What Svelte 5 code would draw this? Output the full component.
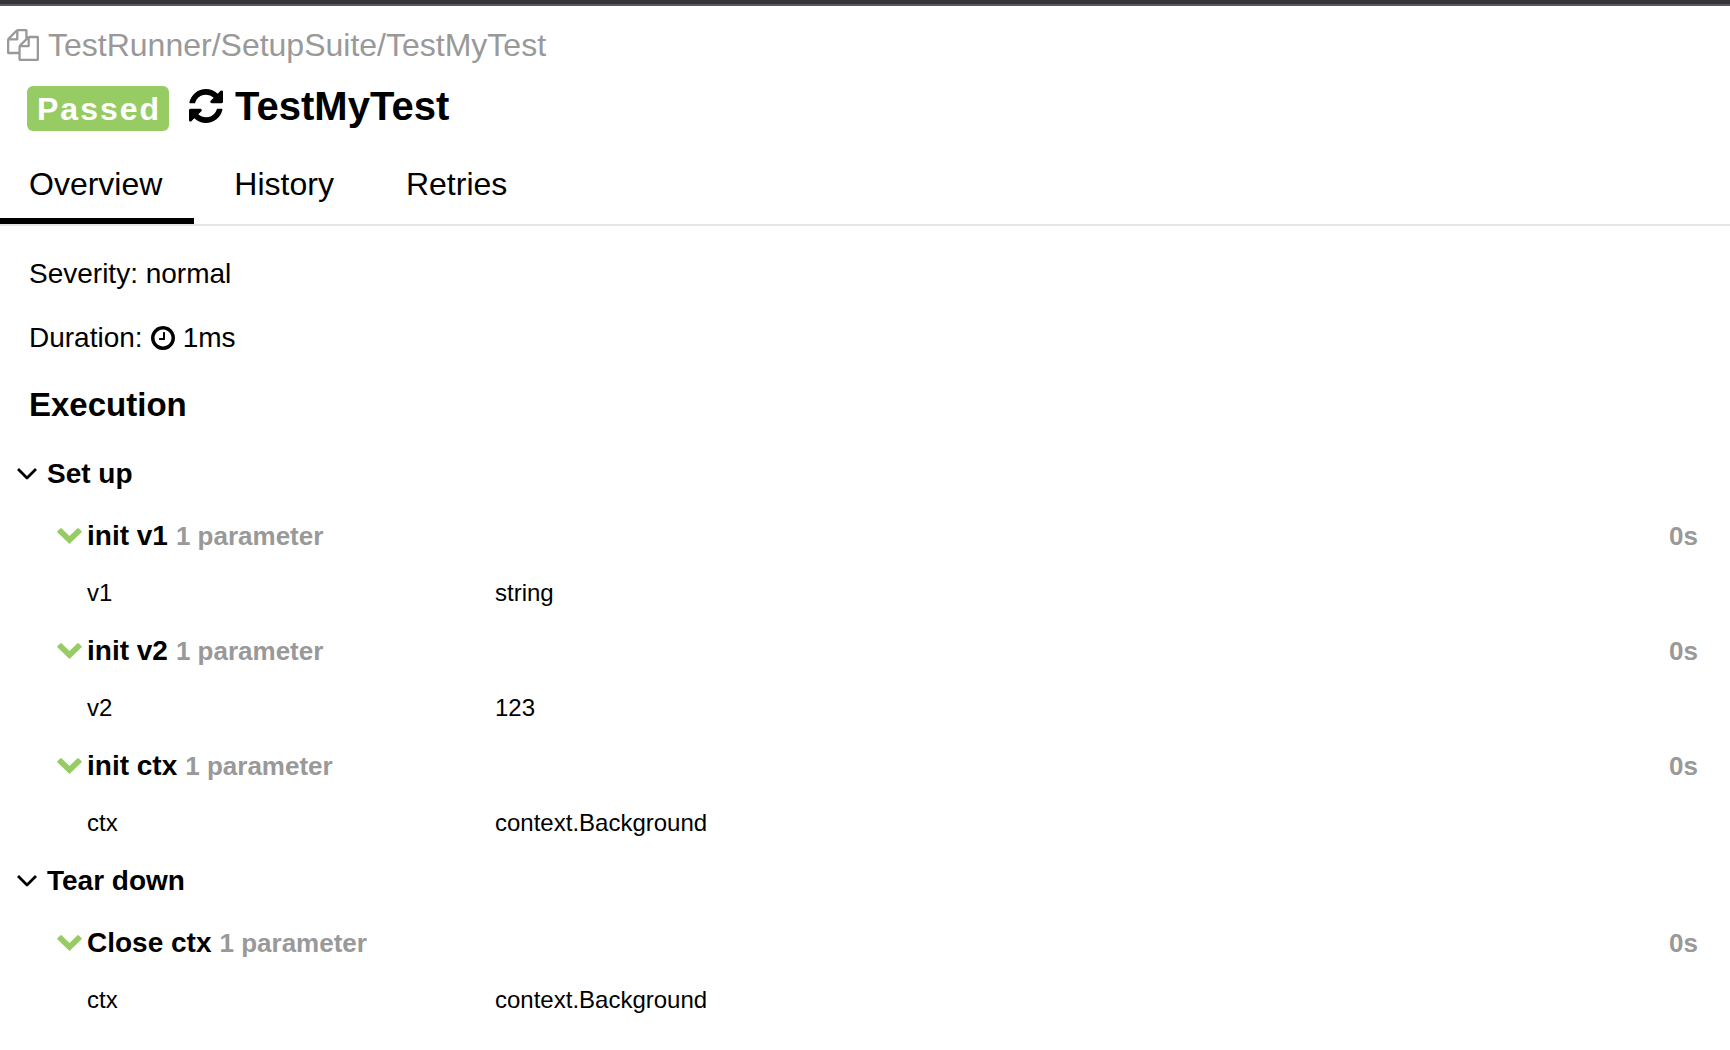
<script lang="ts">
  type Step = { name: string; time: string; params: { name: string; value: string }[] };
  type Stage = { name: string; steps: Step[] };

  const tabs = ['Overview', 'History', 'Retries'];
  let active = $state('Overview');

  const stages: Stage[] = [
    {
      name: 'Set up',
      steps: [
        { name: 'init v1', time: '0s', params: [{ name: 'v1', value: 'string' }] },
        { name: 'init v2', time: '0s', params: [{ name: 'v2', value: '123' }] },
        { name: 'init ctx', time: '0s', params: [{ name: 'ctx', value: 'context.Background' }] },
      ],
    },
    {
      name: 'Tear down',
      steps: [
        { name: 'Close ctx', time: '0s', params: [{ name: 'ctx', value: 'context.Background' }] },
      ],
    },
  ];

  let closed = $state<Record<string, boolean>>({});
  const toggle = (key: string) => (closed[key] = !closed[key]);
</script>

<div class="strip"></div>
<main>
  <header>
    <a class="path" href="#suite">
      <svg width="32" height="32" viewBox="0 0 1792 1792" aria-hidden="true"><path d="M1696 384q40 0 68 28t28 68v1216q0 40-28 68t-68 28h-960q-40 0-68-28t-28-68v-288h-544q-40 0-68-28t-28-68v-672q0-40 20-88t48-76l408-408q28-28 76-48t88-20h416q40 0 68 28t28 68v328q68-40 128-40h416zm-544 213l-299 299h299v-299zm-640-384l-299 299h299v-299zm196 647l316-316v-416h-384v416q0 40-28 68t-68 28h-416v640h512v-256q0-40 20-88t48-76zm956 804v-1152h-384v416q0 40-28 68t-68 28h-416v640h896z" /></svg>
      <span>TestRunner/SetupSuite/TestMyTest</span>
    </a>
    <div class="title">
      <span class="badge">Passed</span>
      <h1>
        <svg width="34" height="34" viewBox="0 0 1536 1536" aria-hidden="true"><path d="M1511 928q0 5-1 7-64 268-268 434.5t-478 166.5q-146 0-282.5-55t-243.5-157l-129 129q-19 19-45 19t-45-19-19-45v-448q0-26 19-45t45-19h448q26 0 45 19t19 45-19 45l-137 137q71 66 161 102t187 36q134 0 250-65t186-179q11-17 53-117 8-23 30-23h192q13 0 22.5 9.5t9.5 22.5zm25-800v448q0 26-19 45t-45 19h-448q-26 0-45-19t-19-45 19-45l138-138q-148-137-349-137-134 0-250 65t-186 179q-11 17-53 117-8 23-30 23h-199q-13 0-22.5-9.5t-9.5-22.5v-7q65-268 270-434.5t480-166.5q146 0 284 55.5t245 156.5l130-129q19-19 45-19t45 19 19 45z" /></svg>
        <span>TestMyTest</span>
      </h1>
    </div>
    <nav>
      {#each tabs as tab}
        <button class="tab" class:active={tab === active} onclick={() => (active = tab)}>{tab}</button>
      {/each}
    </nav>
  </header>

  <p class="meta">Severity: normal</p>
  <p class="meta duration">
    <span>Duration:</span>
    <svg width="24" height="24" viewBox="128 128 1536 1536" aria-hidden="true"><path d="M1024 544v448q0 14-9 23t-23 9h-320q-14 0-23-9t-9-23v-64q0-14 9-23t23-9h224v-352q0-14 9-23t23-9h64q14 0 23 9t9 23zm416 352q0-148-73-273t-198-198-273-73-273 73-198 198-73 273 73 273 198 198 273 73 273-73 198-198 73-273zm224 0q0 209-103 385.5t-279.5 279.5-385.5 103-385.5-103-279.5-279.5-103-385.5 103-385.5 279.5-279.5 385.5-103 385.5 103 279.5 279.5 103 385.5z" /></svg>
    <span>1ms</span>
  </p>

  <h2>Execution</h2>
  <div class="stages">
    {#each stages as stage}
      <section>
        <button class="stage" aria-expanded={!closed[stage.name]} onclick={() => toggle(stage.name)}>
          <svg class="arrow" width="20" height="14" viewBox="0 0 20 14" aria-hidden="true"><path d="M1 2 10 11 19 2" fill="none" stroke="currentColor" stroke-width="2.8" stroke-linejoin="round" /></svg>
          <span>{stage.name}</span>
        </button>
        {#if !closed[stage.name]}
          <div class="steps">
            {#each stage.steps as step}
              <div class="step">
                <button class="head" aria-expanded={!closed[step.name]} onclick={() => toggle(step.name)}>
                  <svg class="arrow passed" width="25" height="16" viewBox="0 0 25 16" aria-hidden="true"><path d="M12.500 16 .6 4.600q-.8-.8 0-1.600L3.200.4q.8-.8 1.600 0L12.500 8 20.200.4q.8-.8 1.600 0l2.600 2.600q.8.8 0 1.600z" /></svg>
                  <span class="name">{step.name}</span>
                  <span class="count">{step.params.length} parameter</span>
                  <span class="time">{step.time}</span>
                </button>
                {#if !closed[step.name]}
                  <table>
                    <tbody>
                      {#each step.params as param}
                        <tr><th scope="row">{param.name}</th><td>{param.value}</td></tr>
                      {/each}
                    </tbody>
                  </table>
                {/if}
              </div>
            {/each}
          </div>
        {/if}
      </section>
    {/each}
  </div>
</main>

<style>
  :global(body) {
    margin: 0;
    background: #fff;
    color: #000;
    font-family: 'Liberation Sans', Arial, Helvetica, sans-serif;
  }
  svg {
    display: block;
    flex: none;
    fill: currentColor;
  }
  button {
    margin: 0;
    padding: 0;
    border: 0;
    background: none;
    color: inherit;
    font: inherit;
    text-align: left;
    cursor: pointer;
  }
  .strip {
    height: 4px;
    background: #35353b;
    border-bottom: 2px solid #5b5a60;
  }
  main {
    padding-bottom: 32px;
  }
  .path {
    display: flex;
    align-items: center;
    gap: 9px;
    padding: 19px 7px 0;
    color: #999;
    font-size: 32px;
    line-height: 40px;
    text-decoration: none;
  }
  .title {
    display: flex;
    align-items: baseline;
    gap: 20px;
    padding: 17px 27px 0;
  }
  .badge {
    padding: 1px 8px 0 10px;
    border-radius: 6px;
    background: #97cc64;
    color: #fff;
    font-size: 32px;
    font-weight: bold;
    line-height: 44px;
    letter-spacing: 2px;
  }
  h1 {
    display: flex;
    align-items: baseline;
    gap: 12px;
    margin: 0;
    font-size: 40px;
    line-height: 48px;
  }
  h1 svg {
    align-self: center;
  }
  nav {
    display: flex;
    gap: 11px;
    margin-top: 33px;
    border-bottom: 2px solid #e5e5e5;
  }
  .tab {
    padding: 0 32px 14px 29px;
    border-bottom: 6px solid transparent;
    font-size: 32px;
    line-height: 40px;
  }
  .tab.active {
    border-bottom-color: #000;
  }
  .meta {
    margin: 32px 29px 0;
    font-size: 28px;
    line-height: 32px;
  }
  .duration {
    display: flex;
    align-items: center;
    gap: 8px;
  }
  h2 {
    margin: 31px 29px 33px;
    font-size: 33px;
    line-height: 40px;
  }
  .stages,
  .steps {
    display: flex;
    flex-direction: column;
    gap: 28px;
  }
  .stage {
    display: flex;
    align-items: center;
    gap: 10px;
    width: 100%;
    padding-left: 17px;
    font-size: 28px;
    font-weight: bold;
    line-height: 32px;
  }
  .steps {
    margin-top: 30px;
  }
  .head {
    display: flex;
    align-items: center;
    width: 100%;
    padding: 0 32px 0 57px;
    font-size: 28px;
    font-weight: bold;
    line-height: 32px;
  }
  .passed {
    color: #97cc64;
  }
  .name {
    margin: 0 8px 0 5px;
  }
  .count,
  .time {
    color: #999;
    font-size: 26px;
  }
  .time {
    margin-left: auto;
  }
  [aria-expanded='false'] .arrow {
    transform: rotate(-90deg);
  }
  table {
    margin: 27px 0 0 87px;
    border-collapse: collapse;
    font-size: 24px;
    line-height: 28px;
  }
  th,
  td {
    padding: 0;
    font-weight: normal;
    text-align: left;
  }
  th {
    width: 408px;
  }
</style>
